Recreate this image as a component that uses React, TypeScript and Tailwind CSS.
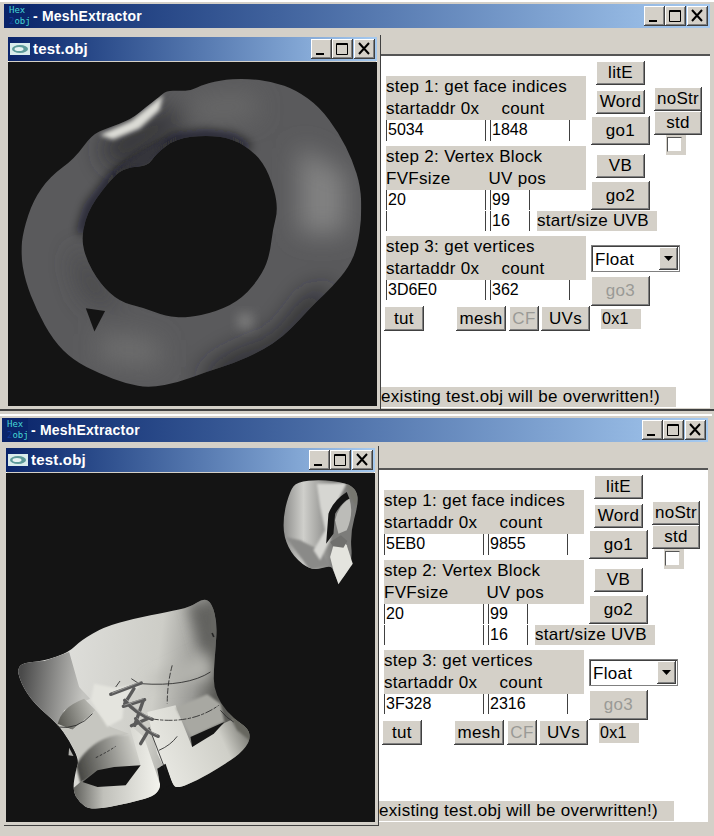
import React from 'react';

const RAISED =
  'bg-[#d4d0c8] shadow-[inset_-1px_-1px_0_#404040,inset_1px_1px_0_#ffffff,inset_-2px_-2px_0_#808080]';

// rounds off a closed polyline, the meshes have no straight silhouettes
function smooth(points: string) {
  const n = points.trim().split(/\s+/).map(Number);
  const pts: [number, number][] = [];
  for (let i = 0; i < n.length; i += 2) pts.push([n[i], n[i + 1]]);
  const mid = (a: [number, number], b: [number, number]) => `${(a[0] + b[0]) / 2} ${(a[1] + b[1]) / 2}`;
  let d = `M${mid(pts[pts.length - 1], pts[0])}`;
  pts.forEach((p, i) => {
    d += ` Q${p[0]} ${p[1]} ${mid(p, pts[(i + 1) % pts.length])}`;
  });
  return d + ' Z';
}

const TORUS_OUTER = smooth(
  '500 93 540 92 575 92 600 78 660 60 740 55 820 65 890 90 960 140 1020 220 1060 300 1085 380 1088 470 1075 560 1050 620 1000 680 950 725 900 780 850 830 790 870 700 910 620 935 540 965 450 983 380 970 300 940 220 900 160 840 110 750 75 660 62 580 70 510 100 420 150 350 225 295 275 225 320 205 395 178 440 140 480 110',
);
const TORUS_HOLE = smooth(
  '530 235 620 225 700 235 770 280 810 340 838 440 820 510 812 580 790 640 730 715 650 755 560 773 500 768 430 742 360 725 300 670 255 590 245 520 270 440 340 350 380 322 445 318 470 280',
);
const CORSET = smooth(
  '45 580 130 572 205 545 240 510 310 470 400 445 500 425 570 410 610 383 635 400 650 460 645 540 640 600 640 650 660 700 700 745 745 775 750 810 720 850 660 890 590 930 530 955 515 940 495 880 470 895 485 970 380 1000 270 1020 235 995 215 960 225 900 235 870 205 810 170 760 100 700 60 640',
);
const EARRING = smooth(
  '890 35 960 28 1040 38 1070 60 1075 100 1050 190 1058 280 1015 342 1000 300 990 285 935 302 880 260 850 200 850 130 870 60',
);

function TorusMesh() {
  return (
    <svg viewBox="24 6 1110 1031" className="block h-full w-full" preserveAspectRatio="none">
      <defs>
        <filter id="t-wide" x="-50%" y="-50%" width="200%" height="200%">
          <feGaussianBlur stdDeviation="38" />
        </filter>
        <filter id="t-mid" x="-50%" y="-50%" width="200%" height="200%">
          <feGaussianBlur stdDeviation="16" />
        </filter>
        <filter id="t-soft" x="-50%" y="-50%" width="200%" height="200%">
          <feGaussianBlur stdDeviation="7" />
        </filter>
        <clipPath id="t-clip">
          <path d={TORUS_OUTER + ' ' + TORUS_HOLE} clipRule="evenodd" />
        </clipPath>
      </defs>
      <rect x="0" y="0" width="1200" height="1100" fill="#141414" />
      <g clipPath="url(#t-clip)">
        <rect x="0" y="0" width="1200" height="1100" fill="#5a5a5c" />
        <g filter="url(#t-wide)">
          <path d="M900 260 L1040 340 L1040 520 L900 520 Z" fill="#828282" />
          <path d="M600 950 L680 890 L830 830 L930 700 L1010 680 L880 860 L640 980 Z" fill="#232327" />
          <path d="M300 820 L480 840 L480 920 L300 900 Z" fill="#707070" />
          <path d="M560 120 L760 100 L780 170 L580 180 Z" fill="#6a6a6a" />
          <path d="M240 560 L300 660 L380 740 L260 720 L220 600 Z" fill="#444446" />
          <path d="M300 250 L520 140 L560 190 L340 330 Z" fill="#2e2e32" />
        </g>
        <path d="M715 760 L760 760 L760 805 L715 805 Z" fill="#7c7c7c" filter="url(#t-mid)" />
        <path
          d="M245 520 L270 440 L340 350 L380 322 L470 270 L530 235 L620 225 L700 235 L750 265"
          fill="none"
          stroke="#0e0e14"
          strokeWidth="20"
          filter="url(#t-mid)"
        />
        <path d="M340 340 L430 270 L500 240 L470 280 L445 318 L380 322 Z" fill="#34343a" filter="url(#t-soft)" />
        <path d="M300 225 L395 182 L440 145 L490 105 L480 150 L420 205 L340 238 Z" fill="#dcdcd6" filter="url(#t-soft)" />
      </g>
      <path d="M258 744 L316 752 L284 814 Z" fill="#141414" />
    </svg>
  );
}

function CorsetMesh() {
  return (
    <svg viewBox="15 8 1110 1047" className="block h-full w-full" preserveAspectRatio="none">
      <defs>
        <linearGradient id="c-body" gradientUnits="userSpaceOnUse" x1="200" y1="500" x2="660" y2="560">
          <stop offset="0" stopColor="#dededa" />
          <stop offset="0.6" stopColor="#cdcdc7" />
          <stop offset="0.85" stopColor="#9a9a96" />
          <stop offset="1" stopColor="#5a5a56" />
        </linearGradient>
        <linearGradient id="c-left" gradientUnits="userSpaceOnUse" x1="60" y1="620" x2="250" y2="640">
          <stop offset="0" stopColor="#4a4a4a" />
          <stop offset="1" stopColor="#c4c4c0" />
        </linearGradient>
        <linearGradient id="c-strap" gradientUnits="userSpaceOnUse" x1="170" y1="760" x2="285" y2="720">
          <stop offset="0" stopColor="#55554f" />
          <stop offset="1" stopColor="#c0c0ba" />
        </linearGradient>
        <linearGradient id="c-band" gradientUnits="userSpaceOnUse" x1="230" y1="880" x2="400" y2="840">
          <stop offset="0" stopColor="#484844" />
          <stop offset="1" stopColor="#c8c8c2" />
        </linearGradient>
        <linearGradient id="c-skirt" gradientUnits="userSpaceOnUse" x1="215" y1="960" x2="480" y2="960">
          <stop offset="0" stopColor="#5c5c58" />
          <stop offset="0.35" stopColor="#c0c0ba" />
          <stop offset="1" stopColor="#f4f4ee" />
        </linearGradient>
        <linearGradient id="c-right" gradientUnits="userSpaceOnUse" x1="500" y1="900" x2="745" y2="790">
          <stop offset="0" stopColor="#e6e6e0" />
          <stop offset="0.7" stopColor="#cfcfc8" />
          <stop offset="1" stopColor="#7a7a74" />
        </linearGradient>
        <linearGradient id="c-ear" gradientUnits="userSpaceOnUse" x1="850" y1="160" x2="1000" y2="160">
          <stop offset="0" stopColor="#8e8e8c" />
          <stop offset="0.4" stopColor="#cfcfcb" />
          <stop offset="1" stopColor="#7c7c7a" />
        </linearGradient>
        <filter id="c-wide" x="-50%" y="-50%" width="200%" height="200%">
          <feGaussianBlur stdDeviation="20" />
        </filter>
        <filter id="c-soft" x="-50%" y="-50%" width="200%" height="200%">
          <feGaussianBlur stdDeviation="3" />
        </filter>
        <clipPath id="c-clip">
          <path d={CORSET} />
        </clipPath>
        <clipPath id="c-ear-clip">
          <path d={EARRING} />
        </clipPath>
      </defs>
      <rect x="0" y="0" width="1200" height="1100" fill="#141414" />

      <path d={CORSET} fill="url(#c-body)" />
      <g clipPath="url(#c-clip)">
        <path d="M40 575 L130 572 L205 545 L235 650 L268 685 L190 720 L170 770 L100 700 L50 640 Z" fill="url(#c-left)" />
        <path d="M560 400 L660 390 L660 560 L600 540 Z" fill="#62625e" filter="url(#c-wide)" />
        <path d="M170 765 Q178 712 250 685 L285 720 L215 778 Z" fill="url(#c-strap)" />
        <path d="M205 810 L170 760 L215 778 L285 720 L330 770 L385 790 Q300 810 235 870 Z" fill="#c6c6c0" />
        <path d="M225 885 Q270 810 345 795 L385 795 L420 890 L340 895 L290 905 L240 940 Z" fill="url(#c-band)" filter="url(#c-soft)" />
        <path d="M210 960 L245 930 L290 950 L375 945 L420 885 L385 762 L430 800 L490 975 L380 1005 L270 1025 L235 995 Z" fill="url(#c-skirt)" />
        <path d="M280 640 L340 652 L425 640 L370 690 L365 745 L320 770 L270 690 Z" fill="#e4e4de" filter="url(#c-soft)" />
        <path d="M440 725 L525 705 L575 830 L672 758 L700 745 L750 775 L755 815 L720 855 L590 935 L530 960 L515 940 L470 850 Z" fill="url(#c-right)" />
        <path d="M525 712 L620 672 L660 700 L672 755 L572 800 Z" fill="#a8a8a2" filter="url(#c-soft)" />
        <path d="M530 590 L610 550 L640 600 L620 630 L430 640 Z" fill="#b4b4ae" filter="url(#c-wide)" />
        <path d="M670 700 L745 770 L755 815 L710 780 Z" fill="#66665f" filter="url(#c-soft)" />
      </g>
      <path d="M245 935 L290 900 L340 890 L420 885 L375 945 L290 950 Z" fill="#141414" />
      <path d="M570 800 L672 755 L640 790 L575 830 Z" fill="#141414" />
      <path d="M470 895 L495 880 L515 940 L482 960 Z" fill="#141414" />
      <path d="M205 832 L218 857 L203 855 Z" fill="#b0b0ac" />

      <g fill="none" stroke="#262626" strokeWidth="2.5">
        <path d="M420 640 Q560 650 630 605" />
        <path d="M515 585 Q500 640 500 700" strokeDasharray="18 5" />
        <path d="M450 745 Q570 765 655 705" strokeDasharray="24 4 10 4" />
        <path d="M660 720 Q680 745 700 755" />
        <path d="M170 770 Q230 780 275 730" />
        <path d="M285 862 Q320 845 345 828" strokeDasharray="8 5" />
        <path d="M445 770 L495 900" />
        <path d="M475 840 Q510 825 530 798" />
        <path d="M635 488 L640 500" strokeWidth="5" />
        <path d="M345 650 L358 632" />
        <path d="M392 625 L415 640" />
      </g>

      <g fill="none" strokeLinecap="round">
        <g stroke="#5a5a5a" strokeWidth="10">
          <path d="M330 672 L422 638" />
          <path d="M368 708 L432 688" />
          <path d="M372 690 Q405 730 455 747" />
          <path d="M392 766 L440 745" />
          <path d="M405 745 Q435 785 473 798" />
          <path d="M420 820 L445 778" />
          <path d="M400 655 L372 700" />
          <path d="M428 690 L402 765" />
        </g>
        <g stroke="#a2a2a0" strokeWidth="2.5">
          <path d="M335 668 L418 635" />
          <path d="M372 704 L428 685" />
          <path d="M378 688 Q410 726 452 743" />
          <path d="M410 743 Q438 780 470 794" />
        </g>
      </g>

      <path d={EARRING} fill="url(#c-ear)" />
      <g clipPath="url(#c-ear-clip)">
        <path d="M855 200 L930 300 L990 285 L960 240 L900 210 Z" fill="#8a8a88" filter="url(#c-soft)" />
        <path d="M950 40 L1040 38 L1000 120 L990 210 L960 270 L940 240 L975 180 L960 110 Z" fill="#d6d6d2" filter="url(#c-soft)" />
        <path d="M1040 38 L1075 60 L1070 110 L1050 80 Z" fill="#77776f" filter="url(#c-soft)" />
      </g>
      <path d="M1040 65 Q1000 90 985 130 L978 220 L1000 190 L1005 130 Q1030 90 1048 85 Z" fill="#141414" />
      <path d="M1048 85 Q1062 130 1040 180 L1015 190 L1005 150 Q1015 105 1048 85 Z" fill="#bcbcb8" />
      <path d="M1020 200 L1040 225 L1058 280 L1015 342 L1000 300 L990 260 L1000 225 Z" fill="#e4e4de" />
      <path d="M990 215 L1022 195 L1042 212 L1030 232 L998 228 Z" fill="#70706e" />
    </svg>
  );
}

function HexIcon() {
  return (
    <div className="flex h-[24px] w-[24px] shrink-0 flex-col bg-[#0a246a] pl-[3px] pt-[1px] font-['DejaVu_Sans_Mono',monospace] text-[9px] font-normal leading-[11px] text-[#45d6d6]">
      <span>Hex</span>
      <span>
        <span className="text-[#123a9a]">2</span>obj
      </span>
    </div>
  );
}

function EyeIcon() {
  return (
    <svg viewBox="0 0 20 12" className="h-[12px] w-[20px] shrink-0">
      <rect width="20" height="12" fill="#d9ecec" />
      <ellipse cx="10" cy="6" rx="8" ry="4" fill="#5d9a9a" />
      <ellipse cx="9" cy="6" rx="4.5" ry="2" fill="#e6f2f2" />
    </svg>
  );
}

function CaptionButton({ kind }: { kind: 'min' | 'max' | 'close' }) {
  return (
    <div className={`flex h-[20px] w-[21px] items-center justify-center ${RAISED}`}>
      <svg viewBox="0 0 21 20" className="h-[20px] w-[21px]">
        {kind === 'min' && <rect x="5" y="14" width="8" height="2" fill="#000" />}
        {kind === 'max' && <path d="M4.5 4.5 H15.5 V15.5 H4.5 Z M4.5 5.5 H15.5" fill="none" stroke="#000" />}
        {kind === 'close' && <path d="M5 4 L15 15 M15 4 L5 15" fill="none" stroke="#000" strokeWidth="2" />}
      </svg>
    </div>
  );
}

function TitleBar({ icon, title, textClass }: { icon: React.ReactNode; title: string; textClass: string }) {
  return (
    <div className="flex h-[24px] shrink-0 items-center gap-[3px] bg-gradient-to-r from-[#0a246a] to-[#a6caf0] pl-[2px] pr-[2px] font-['Liberation_Sans',sans-serif] font-bold text-white">
      {icon}
      <span className={`whitespace-nowrap ${textClass}`}>{title}</span>
      <div className="ml-auto flex">
        <CaptionButton kind="min" />
        <CaptionButton kind="max" />
        <div className="ml-[1px]">
          <CaptionButton kind="close" />
        </div>
      </div>
    </div>
  );
}

function Btn({
  label,
  className,
  disabled,
}: {
  label: string;
  className: string;
  disabled?: boolean;
}) {
  return (
    <div
      className={`flex shrink-0 items-center justify-center whitespace-nowrap ${RAISED} ${className} ${
        disabled ? 'text-[#9a9a96]' : 'text-black'
      }`}
    >
      {label}
    </div>
  );
}

function Field({ value, className }: { value: string; className: string }) {
  return (
    <div
      className={`shrink-0 border-x border-[#404040] bg-white pl-[1px] text-[16px] leading-[20px] tracking-normal ${className}`}
    >
      {value}
    </div>
  );
}

function StepHead({ title, left, right, rightClass }: { title: string; left: string; right: string; rightClass: string }) {
  return (
    <div className="h-[44px] w-[200px] bg-[#d4d0c8] leading-[22px]">
      <div className="whitespace-nowrap">{title}</div>
      <div className="flex whitespace-nowrap">
        <span>{left}</span>
        <span className={rightClass}>{right}</span>
      </div>
    </div>
  );
}

type FormValues = { face: string; faceCount: string; vert: string; vertCount: string };

function Panel({ face, faceCount, vert, vertCount }: FormValues) {
  return (
    <div className="ml-auto flex h-[354px] w-[329px] shrink-0 flex-col overflow-hidden border-t-2 border-[#555555] bg-white font-['Liberation_Sans',sans-serif] text-[17px] tracking-[0.3px] text-black">
      <div className="flex pl-[5px]">
        <div className="w-[205px] shrink-0 pt-[20px]">
          <StepHead title="step 1: get face indices" left="startaddr 0x" right="count" rightClass="ml-[22px]" />
          <div className="flex gap-[4px]">
            <Field value={face} className="h-[21px] w-[100px]" />
            <Field value={faceCount} className="h-[21px] w-[80px]" />
          </div>
          <div className="mt-[5px]">
            <StepHead title="step 2: Vertex Block" left="FVFsize" right="UV pos" rightClass="ml-[38px]" />
          </div>
          <div className="flex gap-[4px]">
            <Field value="20" className="h-[20px] w-[100px]" />
            <Field value="99" className="h-[20px] w-[40px]" />
          </div>
          <div className="mt-[1px] flex gap-[4px]">
            <Field value="" className="h-[20px] w-[100px]" />
            <Field value="16" className="h-[20px] w-[40px]" />
            <div className="ml-[3px] h-[20px] w-[120px] shrink-0 whitespace-nowrap bg-[#d4d0c8] leading-[20px]">
              start/size UVB
            </div>
          </div>
          <div className="mt-[5px]">
            <StepHead title="step 3: get vertices" left="startaddr 0x" right="count" rightClass="ml-[22px]" />
          </div>
          <div className="flex gap-[4px]">
            <Field value={vert} className="h-[20px] w-[100px]" />
            <Field value={vertCount} className="h-[20px] w-[80px]" />
          </div>
        </div>
        <div className="flex w-[59px] shrink-0 flex-col items-center pt-[5px]">
          <Btn label="litE" className="h-[24px] w-[49px]" />
          <Btn label="Word" className="mt-[5px] h-[24px] w-[49px]" />
          <Btn label="go1" className="mt-[2px] h-[29px] w-[59px]" />
          <Btn label="VB" className="mt-[9px] h-[24px] w-[49px]" />
          <Btn label="go2" className="mt-[3px] h-[29px] w-[59px]" />
          <div className="z-10 mt-[35px] flex h-[27px] w-[89px] shrink-0 self-start border border-[#808080] bg-white pl-[3px] pr-[1px] pt-[1px] leading-[25px] shadow-[inset_1px_1px_0_#404040]">
            <span>Float</span>
            <div className={`ml-auto flex h-[23px] w-[19px] items-center justify-center ${RAISED}`}>
              <svg viewBox="0 0 9 5" className="h-[5px] w-[9px]">
                <path d="M0 0 H9 L4.5 5 Z" fill="#000" />
              </svg>
            </div>
          </div>
          <Btn label="go3" disabled className="mt-[4px] h-[30px] w-[59px]" />
        </div>
        <div className="ml-[4px] flex w-[48px] shrink-0 flex-col items-center pt-[31px]">
          <Btn label="noStr" className="h-[24px] w-[48px]" />
          <Btn label="std" className="h-[24px] w-[48px]" />
          <div className="flex h-[20px] w-[20px] -translate-x-[2px] items-start justify-start bg-[#d4d0c8] pl-[1px] pt-[2px]">
            <div className="h-[15px] w-[15px] border border-t-[#555555] border-l-[#555555] border-r-[#d4d0c8] border-b-[#d4d0c8] bg-white" />
          </div>
        </div>
      </div>
      <div className="flex items-start pl-[3px]">
        <Btn label="tut" className="h-[25px] w-[40px]" />
        <Btn label="mesh" className="ml-[32px] h-[25px] w-[50px]" />
        <Btn label="CF" disabled className="ml-[3px] h-[25px] w-[30px]" />
        <Btn label="UVs" className="ml-[2px] h-[25px] w-[49px]" />
        <div className="ml-[11px] mt-[3px] h-[20px] w-[40px] bg-[#d4d0c8] pl-[1px] text-[16px] leading-[20px]">0x1</div>
      </div>
      <div className="mt-auto mb-[1px] h-[20px] w-[295px] whitespace-nowrap bg-[#d4d0c8] leading-[20px]">
        existing test.obj will be overwritten!)
      </div>
    </div>
  );
}

function ChildWindow({ className, children }: { className: string; children: React.ReactNode }) {
  return (
    <div
      className={`absolute left-[1px] flex w-[375px] flex-col border-[3px] border-[#d4d0c8] bg-[#d4d0c8] shadow-[inset_0_0_0_1px_#ffffff,1px_1px_0_#404040] ${className}`}
    >
      <TitleBar icon={<EyeIcon />} title="test.obj" textClass="text-[15px] tracking-[0.2px]" />
      <div className="mt-[1px] min-h-0 flex-1 bg-[#141414]">{children}</div>
    </div>
  );
}

export default function App() {
  return (
    <div className="h-[836px] w-[714px] overflow-hidden bg-[#d4d0c8]">
      <section className="mb-[3px] flex h-[411px] w-[714px] flex-col border-b-2 border-[#404040] pl-[4px] pr-[4px] pt-[4px] shadow-[inset_0_2px_0_#ffffff]">
        <TitleBar icon={<HexIcon />} title="- MeshExtractor" textClass="text-[14px] tracking-[0.2px]" />
        <div className="relative h-[380px]">
          <div className="h-[26px]" />
          <Panel face="5034" faceCount="1848" vert="3D6E0" vertCount="362" />
          <ChildWindow className="top-[6px] h-[375px]">
            <TorusMesh />
          </ChildWindow>
        </div>
      </section>
      <section className="flex h-[422px] w-[712px] flex-col pl-[2px] pr-[4px] pt-[4px] shadow-[inset_0_2px_0_#ffffff]">
        <TitleBar icon={<HexIcon />} title="- MeshExtractor" textClass="text-[14px] tracking-[0.2px]" />
        <div className="relative h-[380px]">
          <div className="h-[26px]" />
          <Panel face="5EB0" faceCount="9855" vert="3F328" vertCount="2316" />
          <ChildWindow className="top-[3px] h-[380px]">
            <CorsetMesh />
          </ChildWindow>
        </div>
      </section>
    </div>
  );
}
